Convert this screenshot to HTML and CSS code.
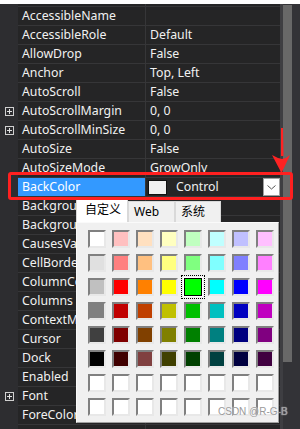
FILE: index.html
```html
<!DOCTYPE html>
<html lang="zh">
  <head>
    <meta charset="UTF-8" />
    <meta name="viewport" content="width=device-width, initial-scale=1" />
    <title>Properties - BackColor</title>
    <link rel="stylesheet" href="styles.css">
  </head>
  <body>
    <div class="window">
      <div class="grid">
        <div class="rows">
          <div class="row first"><div class="gutter"></div><div class="name"></div><div class="value"></div></div>
          <div class="row"><div class="gutter"></div><div class="name">AccessibleName</div><div class="value"></div></div>
          <div class="row"><div class="gutter"></div><div class="name">AccessibleRole</div><div class="value">Default</div></div>
          <div class="row"><div class="gutter"></div><div class="name">AllowDrop</div><div class="value">False</div></div>
          <div class="row"><div class="gutter"></div><div class="name">Anchor</div><div class="value">Top, Left</div></div>
          <div class="row"><div class="gutter"></div><div class="name">AutoScroll</div><div class="value">False</div></div>
          <div class="row"><div class="gutter"><span class="plus"></span></div><div class="name">AutoScrollMargin</div><div class="value">0, 0</div></div>
          <div class="row"><div class="gutter"><span class="plus"></span></div><div class="name">AutoScrollMinSize</div><div class="value">0, 0</div></div>
          <div class="row"><div class="gutter"></div><div class="name">AutoSize</div><div class="value">False</div></div>
          <div class="row"><div class="gutter"></div><div class="name">AutoSizeMode</div><div class="value">GrowOnly</div></div>
          <div class="row selected">
            <div class="gutter"></div>
            <div class="name">BackColor</div>
            <div class="value color-value">
              <span class="mini-swatch"></span>
              <span>Control</span>
              <span class="drop-btn">
                <svg width="9" height="5" viewBox="0 0 9 5"><path d="M0.5 0.5 L4.5 4 L8.5 0.5" fill="none" stroke="#555" stroke-width="1"/></svg>
              </span>
            </div>
          </div>
          <!-- values below are hidden by the open colour picker -->
          <div class="row"><div class="gutter"></div><div class="name">BackgroundImage</div><div class="value"></div></div>
          <div class="row"><div class="gutter"></div><div class="name">BackgroundImageLayout</div><div class="value"></div></div>
          <div class="row"><div class="gutter"></div><div class="name">CausesValidation</div><div class="value"></div></div>
          <div class="row"><div class="gutter"></div><div class="name">CellBorderStyle</div><div class="value"></div></div>
          <div class="row"><div class="gutter"></div><div class="name">ColumnCount</div><div class="value"></div></div>
          <div class="row"><div class="gutter"></div><div class="name">Columns</div><div class="value"></div></div>
          <div class="row"><div class="gutter"></div><div class="name">ContextMenuStrip</div><div class="value"></div></div>
          <div class="row"><div class="gutter"></div><div class="name">Cursor</div><div class="value"></div></div>
          <div class="row"><div class="gutter"></div><div class="name">Dock</div><div class="value"></div></div>
          <div class="row"><div class="gutter"></div><div class="name">Enabled</div><div class="value"></div></div>
          <div class="row"><div class="gutter"><span class="plus"></span></div><div class="name">Font</div><div class="value"></div></div>
          <div class="row"><div class="gutter"></div><div class="name">ForeColor</div><div class="value"></div></div>
          <div class="row"><div class="gutter"></div><div class="name"></div><div class="value"></div></div>
        </div>
        <div class="scrollbar"><div class="thumb"></div></div>
      </div>

      <div class="picker">
        <div class="tabs">
          <div class="tab active">自定义</div>
          <div class="tab">Web</div>
          <div class="tab">系统</div>
        </div>
        <div class="panel">
          <div id="palette"></div>
        </div>
      </div>

      <div class="focus-frame"></div>
      <svg class="arrow" width="24" height="50" viewBox="0 0 24 50">
        <path d="M13 2 L15 2 L15.5 30 L13 30 Z" fill="#ff2323"/>
        <path d="M4 29 Q9 32 14 33 Q19 32 22 29 L13.5 47 Z" fill="#ff2323"/>
      </svg>
      <div class="watermark">CSDN @R-G-B</div>
    </div>

    <script>
      const colors = [
        "#ffffff", "#ffc0c0", "#ffe0c0", "#ffffc0", "#c0ffc0", "#c0ffff", "#c0c0ff", "#ffc0ff",
        "#e0e0e0", "#ff8080", "#ffc080", "#ffff80", "#80ff80", "#80ffff", "#8080ff", "#ff80ff",
        "#c0c0c0", "#ff0000", "#ff8000", "#ffff00", "#00ff00", "#00ffff", "#0000ff", "#ff00ff",
        "#808080", "#c00000", "#c04000", "#c0c000", "#00c000", "#00c0c0", "#0000c0", "#c000c0",
        "#404040", "#800000", "#804000", "#808000", "#008000", "#008080", "#000080", "#800080",
        "#000000", "#400000", "#804040", "#404000", "#004000", "#004040", "#000040", "#400040"
      ];

      const palette = document.getElementById("palette");
      for (let i = 0; i < 64; i++) {
        const cell = document.createElement("div");
        cell.classList.add("cell");
        cell.style.background = colors[i] || "#ffffff";
        // the green one is the current pick
        if (i === 20) cell.classList.add("picked");
        palette.appendChild(cell);
      }
    </script>
  </body>
</html>
```

FILE: styles.css
```css
body {
  margin: 0;
  background: #fff;
  font-family: "Noto Sans", "Noto Sans CJK SC", sans-serif;
  font-size: 12.3px;
}
.window {
  position: relative;
  width: 300px;
  height: 429px;
  padding-top: 4px;
  box-sizing: border-box;
}
.grid {
  display: flex;
  height: 425px;
  overflow: hidden;
  background: #252526;
}
.rows {
  width: 280px;
  margin-top: -16px;
}
.row {
  display: grid;
  grid-template-columns: 18px 128px 1fr;
  height: 19px;
  color: #f1f1f1;
}
.gutter {
  background: #2d2d30;
  display: flex;
  align-items: center;
  padding-left: 5px;
}
.plus {
  width: 9px;
  height: 9px;
  box-sizing: border-box;
  border: 1px solid #d0d0d0;
  position: relative;
}
.plus::before,
.plus::after {
  content: "";
  position: absolute;
  background: #e0e0e0;
}
.plus::before {
  left: 1px;
  top: 3px;
  width: 5px;
  height: 1px;
}
.plus::after {
  left: 3px;
  top: 1px;
  width: 1px;
  height: 5px;
}
.name,
.value {
  line-height: 18px;
  border-bottom: 1px solid #363638;
  white-space: nowrap;
  overflow: hidden;
}
.name {
  padding-left: 4px;
  border-right: 1px solid #363638;
}
.value {
  padding-left: 4px;
}
.row.selected .name {
  background: #3399ff;
  color: #fff;
}
.color-value {
  display: flex;
  align-items: center;
  padding-left: 2px;
}
.mini-swatch {
  width: 19px;
  height: 15px;
  box-sizing: border-box;
  background: #f0f0f0;
  border: 1px solid #111;
  margin-right: 9px;
}
.drop-btn {
  margin-left: auto;
  width: 17px;
  height: 18px;
  box-sizing: border-box;
  background: #fff;
  border: 1px solid #a0a0a0;
  display: flex;
  align-items: center;
  justify-content: center;
}
.scrollbar {
  width: 20px;
  background: #333337;
  border-left: 3px solid #3e3e42;
  box-sizing: border-box;
}
.thumb {
  width: 9px;
  height: 357px;
  margin-top: 1px;
  background: #686868;
}
.picker {
  position: absolute;
  left: 76px;
  top: 197px;
  width: 203px;
}
.tabs {
  display: flex;
  align-items: flex-end;
  height: 25px;
}
.tab {
  height: 21px;
  line-height: 20px;
  padding: 0 0 0 5px;
  box-sizing: border-box;
  background: #f0f0f0;
  border: 1px solid #d9d9d9;
  border-bottom: none;
  color: #000;
  font-size: 12px;
}
.tab:nth-child(2) {
  width: 47px;
}
.tab:nth-child(3) {
  width: 46px;
}
.tab.active {
  width: 52px;
  height: 25px;
  line-height: 24px;
  background: #fff;
  padding-left: 8px;
}
.panel {
  height: 201px;
  box-sizing: border-box;
  background: #f0f0f0;
  border: 1px solid #fafafa;
  border-right-color: #a0a0a0;
  border-bottom-color: #a0a0a0;
  padding: 7px 0 0 11px;
}
#palette {
  display: grid;
  grid-template-columns: repeat(8, 18px);
  grid-auto-rows: 18px;
  gap: 6px;
}
.cell {
  box-sizing: border-box;
  border: 2px solid;
  border-color: #808080 #e8e8e8 #e8e8e8 #808080;
}
.cell.picked {
  border: 1px solid #000;
  box-shadow: 0 0 0 1px #fff;
  outline: 1px dotted #000;
  outline-offset: 2px;
}
.focus-frame {
  position: absolute;
  left: 8px;
  top: 172px;
  width: 285px;
  height: 28px;
  box-sizing: border-box;
  border: 3px solid #ff2020;
  border-radius: 3px;
}
.arrow {
  position: absolute;
  left: 268px;
  top: 126px;
}
.watermark {
  position: absolute;
  left: 218px;
  top: 406px;
  font-family: "Liberation Sans", sans-serif;
  font-size: 10px;
  color: #9a9a9a;
  text-shadow: 0 0 1px #fff;
}
```
